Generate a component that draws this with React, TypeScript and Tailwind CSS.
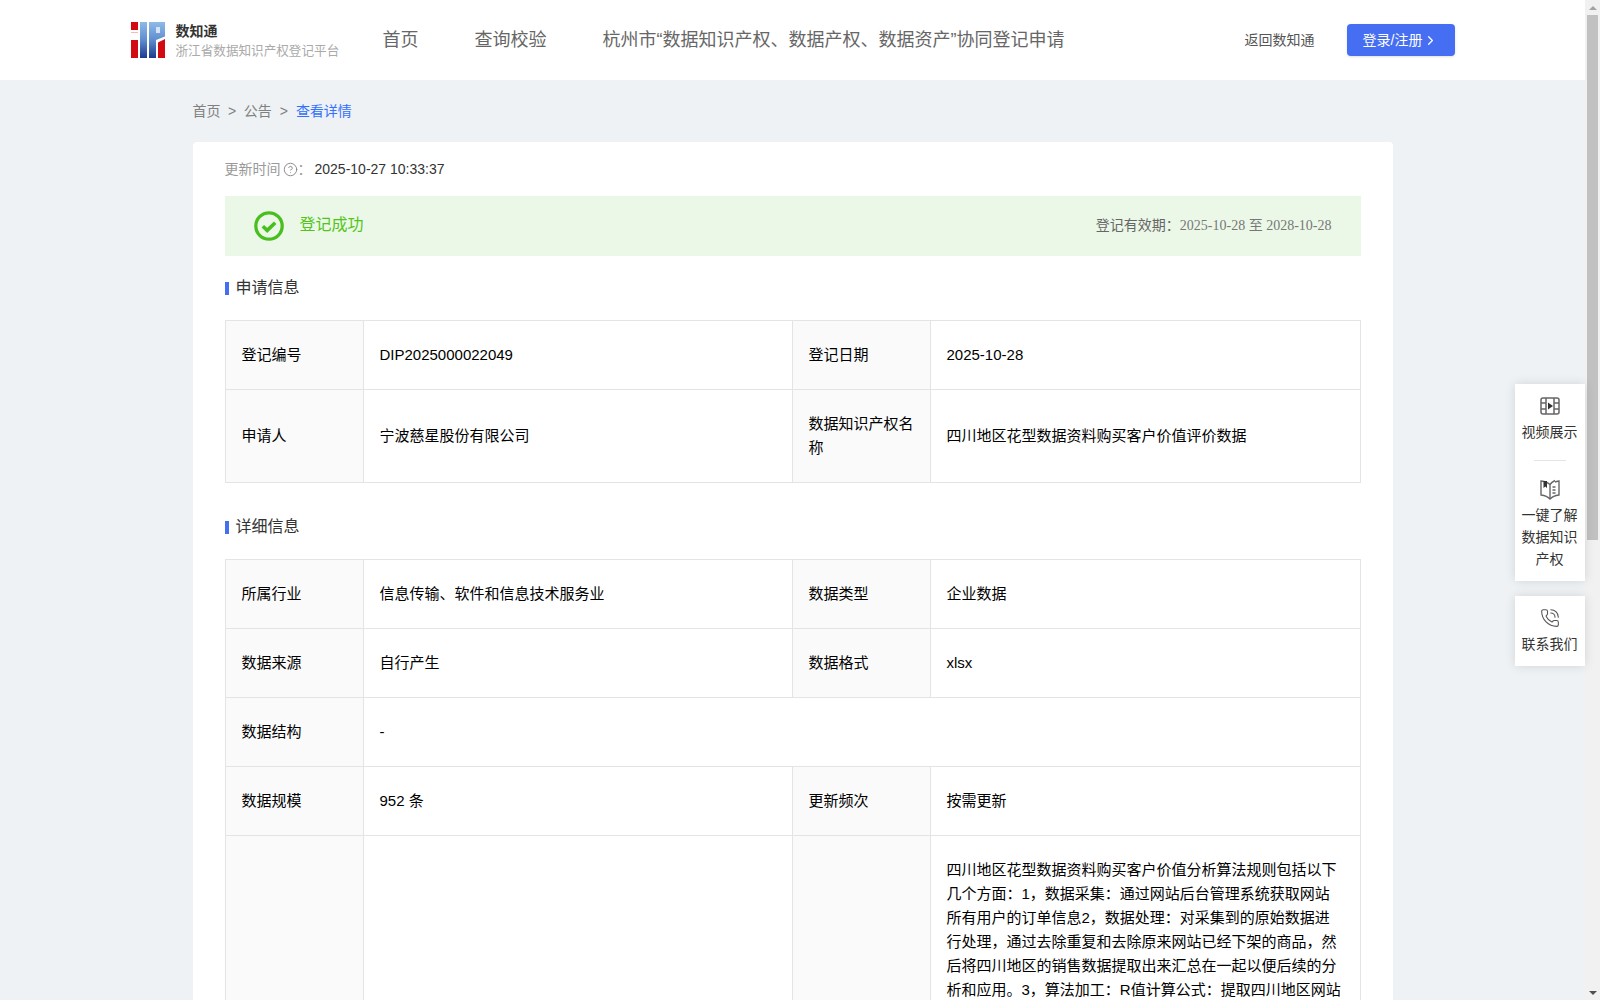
import { ChevronRight, CircleHelp, PhoneCall } from "lucide-react";

const Logo = () => (
  <svg width="34" height="36" viewBox="0 0 34 36" className="shrink-0">
    <defs>
      <linearGradient id="logoBlue" x1="0" y1="0" x2="0" y2="36" gradientUnits="userSpaceOnUse">
        <stop offset="0" stopColor="#8fbbe8" />
        <stop offset="0.5" stopColor="#5f8dcf" />
        <stop offset="1" stopColor="#1d3a8f" />
      </linearGradient>
    </defs>
    <rect x="0" y="0" width="7" height="8" fill="#d20a12" />
    <rect x="0" y="10" width="7" height="1" fill="#f3b9bc" />
    <rect x="0" y="18" width="7" height="18" fill="#d20a12" />
    <rect x="9" y="0" width="7" height="36" fill="url(#logoBlue)" />
    <rect x="18" y="0" width="7" height="36" fill="url(#logoBlue)" />
    <path d="M25 0h9v14.500l-9 3.500z" fill="url(#logoBlue)" />
    <rect x="25" y="5" width="4" height="6" fill="#d4e3f5" />
    <path d="M27 20.500l7-3.500v19h-7z" fill="#d20a12" />
  </svg>
);

const FilmIcon = () => (
  <svg width="20" height="18" viewBox="0 0 20 18" fill="none" stroke="#666" strokeWidth="1.500">
    <rect x="1" y="1" width="18" height="16" rx="2" />
    <path d="M6 1v16M14 1v16M1 6h5M1 12h5M14 6h5M14 12h5" />
    <path d="M8 5.500l5 3.500-5 3.500z" fill="#333" stroke="none" />
  </svg>
);

const BookIcon = () => (
  <svg width="20" height="21" viewBox="0 0 20 21" fill="none" stroke="#666" strokeWidth="1.400">
    <path d="M10 5.500C8 3.500 5 2.500 1 2v14c4 .5 7 1.800 9 4 2-2.200 5-3.500 9-4V2c-1.500.2-3 .5-4 1" />
    <path d="M10 5.500V20M15 1.500C13 2.500 11 4 10 5.500" />
    <path d="M3.500 2h3.500v7l-1.750-1.500-1.750 1.500z" fill="#333" stroke="none" />
    <path d="M12.500 8h3M12.500 11h3M12.500 14h3" />
  </svg>
);

const SuccessIcon = () => (
  <svg width="30" height="30" viewBox="0 0 30 30" fill="none" stroke="#48bf1f">
    <circle cx="15" cy="15" r="13.200" strokeWidth="3.300" />
    <path d="M8.800 15.200l4.400 4.200 8-7.600" strokeWidth="3.600" />
  </svg>
);

const SectionTitle = ({ text }: { text: string }) => (
  <div className="h-16 flex items-center">
    <span className="w-1 h-[13px] bg-[#456ef2] mr-[7px]" />
    <span className="text-base text-[#333]">{text}</span>
  </div>
);

const labelCell = "bg-[#fafafa] border border-[#e4e4e4] px-4 py-[22px] text-left align-middle font-normal";
const valueCell = "border border-[#e4e4e4] px-4 py-[22px] align-middle";

const InfoTable = ({ children }: { children: React.ReactNode }) => (
  <table className="w-[1135px] table-fixed border-collapse text-[15px] leading-6 text-black">
    <colgroup>
      <col className="w-[138px]" />
      <col className="w-[429px]" />
      <col className="w-[138px]" />
      <col className="w-[430px]" />
    </colgroup>
    <tbody>{children}</tbody>
  </table>
);

const Row = ({ a, b, c, d }: { a: string; b: string; c: string; d: string }) => (
  <tr>
    <th className={labelCell}>{a}</th>
    <td className={valueCell}>{b}</td>
    <th className={labelCell}>{c}</th>
    <td className={valueCell}>{d}</td>
  </tr>
);

const App = () => {
  return (
    <div className="flex h-screen overflow-hidden bg-[#eef2f5] font-['Liberation_Sans','Noto_Sans_CJK_SC',sans-serif]">
      <div className="relative flex-1 min-w-0">
        {/* Header */}
        <header className="h-20 bg-white">
          <div className="mx-auto w-[1324px] h-full flex items-center">
            <Logo />
            <div className="ml-[11px] w-[190px] pt-[2px]">
              <div className="text-sm leading-[18px] font-bold text-[#333]">数知通</div>
              <div className="text-[12.600px] leading-[20px] mt-[1px] text-[#aaa] whitespace-nowrap">浙江省数据知识产权登记平台</div>
            </div>
            <nav className="flex gap-14 text-lg text-[#666] ml-[17px] whitespace-nowrap">
              <span>首页</span>
              <span>查询校验</span>
              <span>杭州市“数据知识产权、数据产权、数据资产”协同登记申请</span>
            </nav>
            <span className="ml-auto text-sm text-[#555]">返回数知通</span>
            <button className="ml-8 w-[108px] h-8 rounded-sm bg-[#456ef2] text-white text-sm flex items-center justify-center shadow-sm">
              <span>登录/注册</span>
              <ChevronRight size={15} strokeWidth={2} className="ml-[1px]" />
            </button>
          </div>
        </header>

        <div className="mx-auto w-[1200px]">
          {/* Breadcrumb */}
          <div className="h-[62px] pb-px flex items-center text-sm text-[#808080]">
            <span>首页</span>
            <span className="mx-[7.500px]">&gt;</span>
            <span>公告</span>
            <span className="mx-2">&gt;</span>
            <span className="text-[#3370ff]">查看详情</span>
          </div>

          <div className="bg-white rounded px-8">
            <div className="h-[54px] flex items-center text-sm">
              <span className="text-[#999]">更新时间</span>
              <CircleHelp size={15} strokeWidth={1.500} className="text-[#888] ml-[2px]" />
              <span className="text-[#999]">：</span>
              <span className="text-[#333] ml-[3px]">2025-10-27 10:33:37</span>
            </div>

            <div className="h-[60px] bg-[#ebf8e7] flex items-center pl-[29px] pr-[29px]">
              <SuccessIcon />
              <span className="ml-4 pb-[2px] text-base text-[#52c41a]">登记成功</span>
              <span className="ml-auto pb-[2px] text-sm text-[#666]">
                登记有效期：<span className="font-['Liberation_Serif','Noto_Sans_CJK_SC',serif] text-[#777]">2025-10-28 至 2028-10-28</span>
              </span>
            </div>

            <SectionTitle text="申请信息" />
            <InfoTable>
              <Row a="登记编号" b="DIP2025000022049" c="登记日期" d="2025-10-28" />
              <Row a="申请人" b="宁波慈星股份有限公司" c="数据知识产权名称" d="四川地区花型数据资料购买客户价值评价数据" />
            </InfoTable>

            <div className="mt-3">
              <SectionTitle text="详细信息" />
            </div>
            <InfoTable>
              <Row a="所属行业" b="信息传输、软件和信息技术服务业" c="数据类型" d="企业数据" />
              <Row a="数据来源" b="自行产生" c="数据格式" d="xlsx" />
              <tr>
                <th className={labelCell}>数据结构</th>
                <td className={valueCell} colSpan={3}>-</td>
              </tr>
              <Row a="数据规模" b="952 条" c="更新频次" d="按需更新" />
              <Row
                a=""
                b=""
                c=""
                d="四川地区花型数据资料购买客户价值分析算法规则包括以下几个方面：1，数据采集：通过网站后台管理系统获取网站所有用户的订单信息2，数据处理：对采集到的原始数据进行处理，通过去除重复和去除原来网站已经下架的商品，然后将四川地区的销售数据提取出来汇总在一起以便后续的分析和应用。3，算法加工：R值计算公式：提取四川地区网站"
              />
            </InfoTable>
          </div>
        </div>

        {/* Floating side tools */}
        <div className="absolute right-0 top-[384px] w-[70px] flex flex-col gap-[15px] text-sm text-[#333] text-center">
          <div className="h-[197px] bg-white pr-px shadow-[0_0_10px_rgba(0,0,0,0.12)] flex flex-col items-center pt-[13px]">
            <FilmIcon />
            <div className="mt-[6px] leading-[22px]">视频展示</div>
            <div className="w-8 h-px bg-[#e5e5e5] mt-[17px]" />
            <div className="mt-[18px]"><BookIcon /></div>
            <div className="mt-1 leading-[22px]">一键了解<br />数据知识<br />产权</div>
          </div>
          <div className="h-[70px] bg-white pr-px shadow-[0_0_10px_rgba(0,0,0,0.12)] flex flex-col items-center pt-[12px]">
            <PhoneCall size={20} strokeWidth={1.300} className="text-[#555]" />
            <div className="mt-[5px] leading-[22px]">联系我们</div>
          </div>
        </div>
      </div>

      {/* Scrollbar */}
      <div className="w-[15px] shrink-0 bg-[#f1f1f1] flex flex-col">
        <div className="h-[15px] flex items-center justify-center">
          <span className="w-0 h-0 border-x-[4px] border-x-transparent border-b-[4px] border-b-[#a3a3a3]" />
        </div>
        <div className="h-[525px] ml-[2px] mr-[2px] bg-[#c1c1c1]" />
        <div className="mt-auto h-[15px] flex items-center justify-center">
          <span className="w-0 h-0 border-x-[4px] border-x-transparent border-t-[4px] border-t-[#505050]" />
        </div>
      </div>
    </div>
  );
};

export default App;
